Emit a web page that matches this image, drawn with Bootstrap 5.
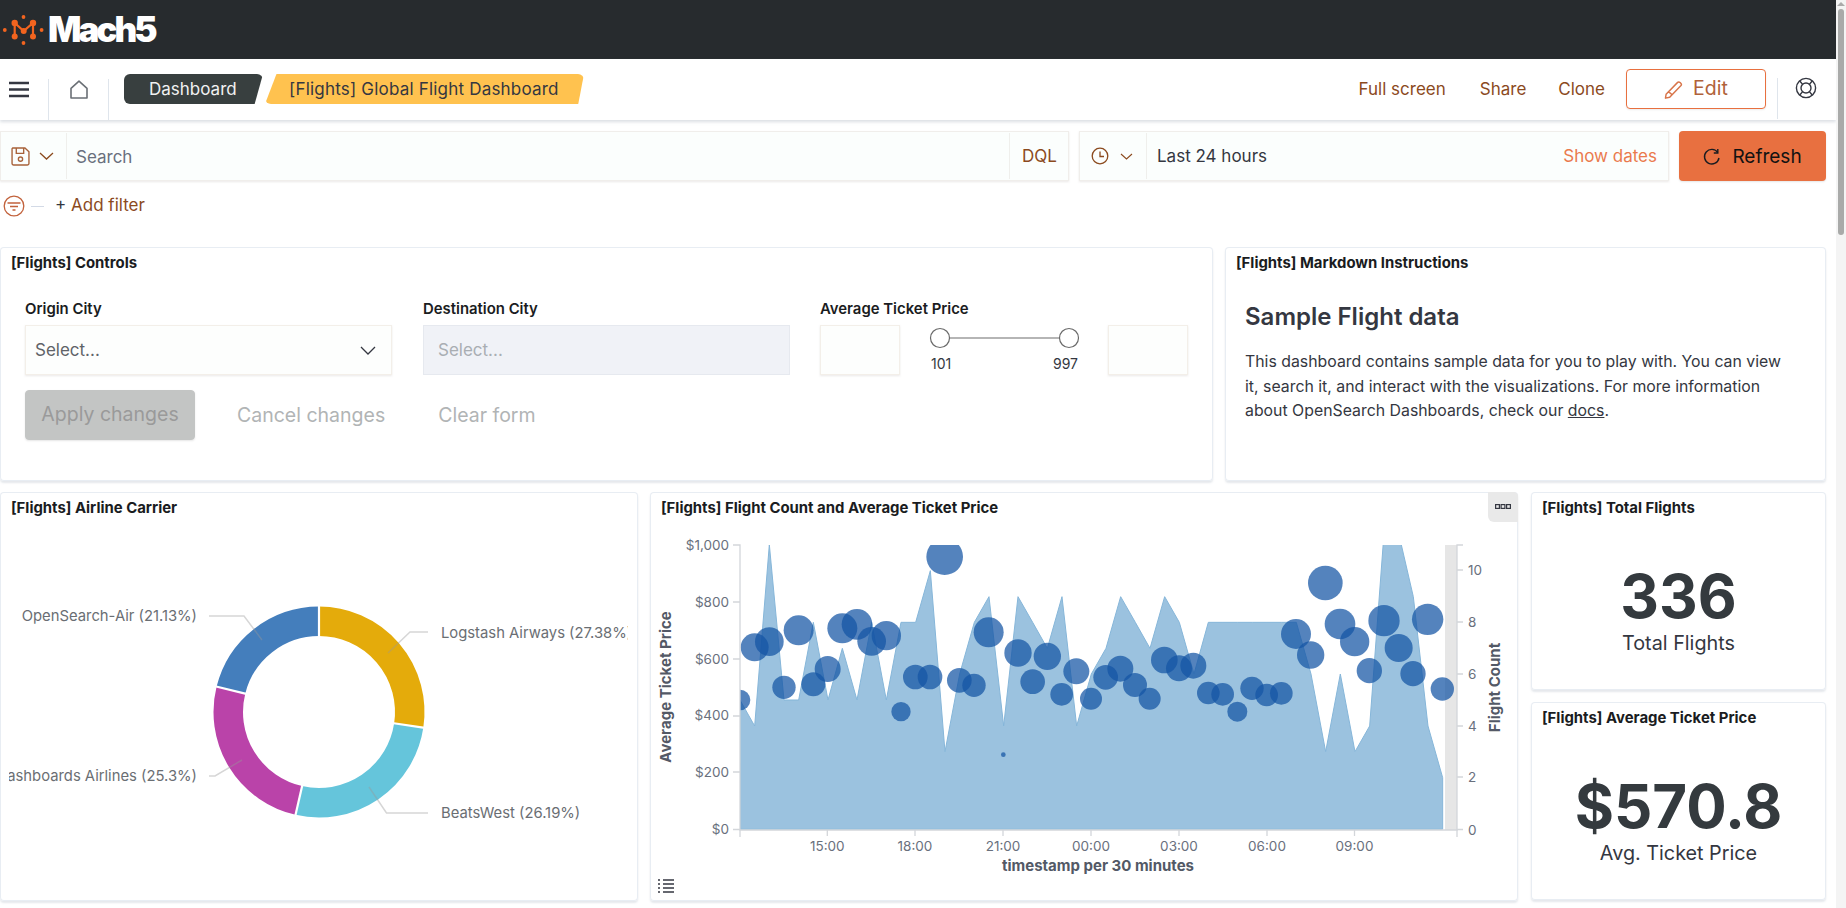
<!DOCTYPE html>
<html lang="en">
<head>
<meta charset="utf-8">
<title>[Flights] Global Flight Dashboard</title>
<link rel="stylesheet" href="https://cdn.jsdelivr.net/npm/bootstrap@5.3.0/dist/css/bootstrap.min.css">
<style>
html,body{height:908px;overflow:hidden;background:#fff;}
body{font-family:Inter,"Liberation Sans",sans-serif;font-size:17px;color:#343741;}
.shell{height:908px;}
.page-col{width:1836px;flex:none;height:908px;overflow:hidden;}
.rail{width:10px;flex:none;background:#f4f4f4;}
.rail-arrow{width:0;height:0;border-left:4px solid transparent;border-right:4px solid transparent;border-bottom:4px solid #aaa;margin:2px 0 3px 1px;}
.rail-thumb{width:6px;height:226px;background:#a9aaa9;border-radius:3px;margin-left:2px;}
.top-bar{height:59px;background:#272b2e;padding:0;flex-wrap:nowrap;justify-content:flex-start;}
.logo-mark{margin-left:2px;}
.logo-word{font-weight:900;font-size:35px;line-height:59px;letter-spacing:-3px;color:#fff;margin-left:4px;}
.sub-bar{height:61px;box-shadow:0 2px 3px rgba(152,162,179,.35);position:relative;background:#fff;}
.nav-cell{height:41px;margin-top:20px;border-right:1px solid #dfe5ec;}
.cell-a{width:49px;}.cell-b{width:60px;}
.cell-a svg{margin:2px 0 0 8px;display:block;}
.cell-b svg{margin:1px 0 0 20px;display:block;}
.crumb{height:30px;line-height:30px;margin-top:15px;font-size:17px;white-space:nowrap;}
.crumb-dark{background:#383f3f;color:#f1f1f1;width:139px;margin-left:15px;padding-left:25px;border-radius:6px;clip-path:polygon(0 0,100% 0,94% 100%,0 100%);}
.crumb-gold{background:#ffc24f;color:#343741;width:319px;margin-left:2px;padding-left:24px;border-radius:6px;letter-spacing:.2px;clip-path:polygon(3.6% 0,100% 0,98.2% 100%,0 100%);}
.nav-link-x{color:#8b4a1e;font-size:17px;line-height:20px;}
.edit-btn{width:140px;height:40px;border:1px solid #e8703f;border-radius:4px;color:#b0623a;background:#fff;font-size:19.500px;display:flex;align-items:center;justify-content:center;gap:8px;padding:0;box-shadow:0 1px 2px rgba(0,0,0,.08);}
.q-row{padding-top:11px;height:61px;gap:0;}
.q-box{height:50px;background:#fbfefd;box-shadow:inset 0 0 0 1px #f0eeeb,0 1px 2px rgba(120,110,100,.15);}
.q-search{width:1069px;}
.q-time{width:590px;margin-left:10px;}
.q-sep{width:1px;height:46px;background:#efefec;flex:none;}
.refresh-btn{width:147px;height:50px;margin-left:10px;background:#e87040;border:0;border-radius:4px;color:#121212;font-size:19px;font-weight:400;display:flex;align-items:center;justify-content:center;gap:11px;padding:2px 0 0;box-shadow:0 1px 2px rgba(0,0,0,.1);}
.brown{color:#8b4a1e;}
.muted-q{color:#69707d;}
.filter-row{height:50px;margin-bottom:16px;}
.plus-mark{color:#343741;}
.grid-zone{gap:11px;}
.panel{--bs-card-border-width:0;border-radius:4px;background:#fff;box-shadow:inset 0 0 0 1px #e8edf3,0 2px 2px rgba(152,162,179,.25);overflow:hidden;flex:none;}
.panel-head{height:36px;padding:6px 11px 0;font-size:14.900px;font-weight:700;line-height:20px;color:#1a1c21;white-space:nowrap;}
.w-ctrl{width:1213px;height:234px;}
.w-md{width:601px;height:234px;margin-left:12px;}
.w-pie{width:638px;height:409px;}
.w-chart{width:868px;height:409px;margin-left:12px;}
.w-side{width:295px;margin-left:13px;gap:12px;}
.metric-panel{height:198px;}
.ctrl-body{padding:16px 0 0 25px;}
.ctrl-col{width:367px;}
.ctrl-col+.ctrl-col{margin-left:31px;}
.ctrl-col.wide{width:368px;margin-left:30px;}
.ctrl-label{font-size:14.900px;font-weight:600;line-height:20px;color:#1a1c21;margin-bottom:6px;white-space:nowrap;}
.ctrl-input{height:50px;background:#fdfefd;box-shadow:inset 0 0 0 1px #f3efe9,0 1px 2px rgba(120,110,100,.15);padding:0 10px;color:#5f6368;line-height:50px;}
.ctrl-input.off{background:#f0f2f7;box-shadow:inset 0 0 0 1px #e6e9ef;color:#a9aeb3;padding-left:15px;}
.ctrl-input.numbox{width:80px;flex:none;}
.btn-row{margin-top:15px;}
.apply-x{--bs-btn-disabled-bg:#c3c5c4;--bs-btn-disabled-color:#9a9a9a;--bs-btn-disabled-border-color:#c3c5c4;--bs-btn-disabled-opacity:1;width:170px;height:50px;font-size:19.500px;padding:0;border-radius:4px;box-shadow:0 1px 2px rgba(0,0,0,.1);white-space:nowrap;}
.ghost-x{color:#b1b4b5;font-size:19.500px;line-height:50px;white-space:nowrap;}
.ghost-a{margin-left:42px;}.ghost-b{margin-left:53px;}
.md-body{padding:19px 20px 0;}
.md-title{font-size:24px;font-weight:600;line-height:30px;color:#343741;margin:0 0 19px;}
.md-copy{font-size:15.850px;line-height:24.700px;color:#343741;margin:-1px 0 0;white-space:nowrap;}
.md-copy a{color:#343741;}
.metric-big{font-size:60px;font-weight:700;line-height:60px;color:#343a3e;margin-top:38px;text-align:center;}
.metric-sub{font-size:19.800px;line-height:24px;color:#343741;margin-top:5px;text-align:center;}
.menu-chip{position:absolute;top:0;right:0;width:30px;height:30px;background:#e9e9e9;border-radius:0 4px 0 6px;display:flex;align-items:center;justify-content:center;}
.viz{display:block;}
.viz text{font-family:Inter,"Liberation Sans",sans-serif;}
.tick-t{font-size:13.500px;fill:#69707d;}
.axis-t{font-size:15px;font-weight:700;fill:#535966;}
.pie-t{font-size:14.800px;fill:#6a6e73;}
.ms-custom-a{margin-left:34px;}
.ms-custom-b{margin-left:32px;}
.ms-custom-c{margin-left:21px;}
.right-group{align-self:flex-start;height:59px;}
.help-cell{width:59px;margin:20px 0 0 11px;border-right:0;border-left:1px solid #dfe5ec;}
.help-cell svg{display:block;margin:-1px 0 0 17px;}
.save-zone{width:66px;padding-left:11px;flex:none;}
.chev-a{margin-left:9px;}
.search-word{padding:3px 0 0 9px;}
.dql-word{width:59px;text-align:center;padding-top:1px;}
.clock-zone{width:67px;padding-left:12px;flex:none;}
.chev-b{margin-left:11px;}
.last-word{padding:2px 0 0 10px;color:#343741;}
.dates-word{color:#ea7a4d;padding:2px 12px 0 0;}
.filter-ic{margin-left:3px;}
.dash-x{width:13px;height:1px;background:#d3dae6;margin:0 11px 0 6px;}
.sel-chev{margin-right:6px;}
</style>
</head>
<body>
<div class="shell d-flex">
<div class="page-col d-flex flex-column">

  <nav class="navbar top-bar">
    <svg class="logo-mark" width="42" height="32" viewBox="0 12 42 32" aria-hidden="true">
      <g fill="#f2641f"><circle cx="2.800" cy="28" r="1.900"/><circle cx="21.500" cy="15" r="1.900"/><circle cx="39.600" cy="28" r="1.900"/><circle cx="21.500" cy="41" r="1.900"/>
      <circle cx="12.700" cy="21" r="3.200"/><circle cx="31" cy="21" r="3.200"/><circle cx="12.700" cy="34.600" r="3"/><circle cx="31" cy="34.600" r="3"/><circle cx="21.700" cy="29" r="3"/></g>
      <path d="M12.700 34.600V21l9 8 9.300-8v13.600" fill="none" stroke="#f2641f" stroke-width="2.200"/>
    </svg>
    <span class="logo-word">Mach5</span>
  </nav>

  <div class="sub-bar d-flex">
    <div class="nav-cell cell-a"><svg width="22" height="17" viewBox="0 0 22 17" aria-hidden="true"><path d="M1 2h20M1 8.500h20M1 15h20" stroke="#343741" stroke-width="2.400" fill="none"/></svg></div>
    <div class="nav-cell cell-b"><svg width="20" height="19" viewBox="0 0 20 19" aria-hidden="true"><path d="M2 8.300 10 1.200l8 7.100V18H2z" fill="none" stroke="#6a6f75" stroke-width="1.600" stroke-linejoin="round"/></svg></div>
    <div class="crumb crumb-dark">Dashboard</div>
    <div class="crumb crumb-gold">[Flights] Global Flight Dashboard</div>
    <div class="ms-auto d-flex align-items-center right-group">
      <span class="nav-link-x">Full screen</span>
      <span class="nav-link-x ms-custom-a">Share</span>
      <span class="nav-link-x ms-custom-b">Clone</span>
      <button class="btn edit-btn ms-custom-c" type="button">
        <svg width="21" height="20" viewBox="0 0 20 19" aria-hidden="true"><path d="M2 14.500 13 3.200c1.300-1.300 4.600 1.400 3.200 3L5.400 17.300l-4 .9zM4.500 12.200l3.300 2.800" fill="none" stroke="#d8754a" stroke-width="1.400" stroke-linejoin="round"/></svg>
        Edit
      </button>
      <div class="nav-cell help-cell"><svg width="22" height="22" viewBox="0 0 22 22" aria-hidden="true"><g fill="none" stroke="#343741" stroke-width="1.400"><circle cx="11" cy="11" r="9.600"/><circle cx="11" cy="11" r="5"/><path d="M4.600 3.700 7.600 7.400M17.400 3.700l-3 3.700M4.600 18.300l3-3.700M17.400 18.300l-3-3.700"/></g></svg></div>
    </div>
  </div>

  <div class="q-row d-flex">
    <div class="q-box q-search d-flex align-items-center">
      <div class="d-flex align-items-center save-zone">
        <svg width="19" height="19" viewBox="0 0 18 18" aria-hidden="true"><path d="M1.600 1h11.600L17 4.600v11a1.400 1.400 0 0 1-1.400 1.400H2.400A1.400 1.400 0 0 1 1 15.600V1.600zM5 1v5h7V1" fill="none" stroke="#a8623a" stroke-width="1.300"/><circle cx="9" cy="11.500" r="2" fill="none" stroke="#a8623a" stroke-width="1.300"/></svg>
        <svg class="chev-a" width="15" height="8" viewBox="0 0 15 8" aria-hidden="true"><path d="m1 1 6.500 6L14 1" fill="none" stroke="#8b4a1e" stroke-width="1.300"/></svg>
      </div>
      <div class="q-sep"></div>
      <span class="muted-q flex-grow-1 search-word">Search</span>
      <div class="q-sep"></div>
      <span class="brown dql-word">DQL</span>
    </div>
    <div class="q-box q-time d-flex align-items-center">
      <div class="d-flex align-items-center clock-zone">
        <svg width="18" height="18" viewBox="0 0 18 18" aria-hidden="true"><circle cx="9" cy="9" r="7.800" fill="none" stroke="#8b4a1e" stroke-width="1.300"/><path d="M9 4.500V9.500h4" fill="none" stroke="#8b4a1e" stroke-width="1.300"/></svg>
        <svg class="chev-b" width="13" height="7" viewBox="0 0 13 7" aria-hidden="true"><path d="m1 1 5.500 5L12 1" fill="none" stroke="#8b4a1e" stroke-width="1.100"/></svg>
      </div>
      <div class="q-sep"></div>
      <span class="flex-grow-1 last-word">Last 24 hours</span>
      <span class="dates-word">Show dates</span>
    </div>
    <button class="btn refresh-btn" type="button">
      <svg width="18" height="18" viewBox="0 0 18 18" aria-hidden="true"><path d="M14.800 4.500A7.300 7.300 0 1 0 16 10" fill="none" stroke="#1a1c21" stroke-width="1.400"/><path d="M14.800 1v4h-4" fill="none" stroke="#1a1c21" stroke-width="1.400"/></svg>
      Refresh
    </button>
  </div>

  <div class="filter-row d-flex align-items-center">
    <svg class="filter-ic" width="22" height="22" viewBox="0 0 22 22" aria-hidden="true"><circle cx="11" cy="11" r="9.800" fill="none" stroke="#c2623c" stroke-width="1.300"/><path d="M4.500 8h13M7 11.500h8M9.500 15h3" stroke="#c2623c" stroke-width="1.300"/></svg>
    <span class="dash-x"></span>
    <span class="brown"><span class="plus-mark">+</span> Add filter</span>
  </div>

  <div class="grid-zone d-flex flex-column">
    <div class="d-flex">
      <section class="card panel w-ctrl">
        <div class="panel-head">[Flights] Controls</div>
        <div class="ctrl-body">
          <div class="d-flex">
            <div class="ctrl-col">
              <div class="ctrl-label">Origin City</div>
              <div class="ctrl-input d-flex align-items-center justify-content-between"><span>Select...</span>
                <svg class="sel-chev" width="16" height="9" viewBox="0 0 16 9" aria-hidden="true"><path d="m1 1 7 7 7-7" fill="none" stroke="#343741" stroke-width="1.300"/></svg></div>
            </div>
            <div class="ctrl-col">
              <div class="ctrl-label">Destination City</div>
              <div class="ctrl-input off">Select...</div>
            </div>
            <div class="ctrl-col wide">
              <div class="ctrl-label">Average Ticket Price</div>
              <div class="d-flex">
                <div class="ctrl-input numbox"></div>
                <svg class="viz flex-grow-1" width="208" height="50" viewBox="900 325 208 50">
                  <path d="M950 338h109" stroke="#b5b5b5" stroke-width="2"/>
                  <circle cx="940" cy="338" r="9.500" fill="#fff" stroke="#6a6a6a" stroke-width="1.200"/>
                  <circle cx="1069" cy="338" r="9.500" fill="#fff" stroke="#6a6a6a" stroke-width="1.200"/>
                  <text x="931" y="369" font-size="14" fill="#343741">101</text>
                  <text x="1053" y="369" font-size="14" fill="#343741">997</text>
                </svg>
                <div class="ctrl-input numbox"></div>
              </div>
            </div>
          </div>
          <div class="btn-row d-flex">
            <button class="btn apply-x" type="button" disabled>Apply changes</button>
            <span class="ghost-x ghost-a">Cancel changes</span>
            <span class="ghost-x ghost-b">Clear form</span>
          </div>
        </div>
      </section>
      <section class="card panel w-md">
        <div class="panel-head">[Flights] Markdown Instructions</div>
        <div class="md-body">
          <h3 class="md-title">Sample Flight data</h3>
          <p class="md-copy">This dashboard contains sample data for you to play with. You can view<br>it, search it, and interact with the visualizations. For more information<br>about OpenSearch Dashboards, check our <a href="#">docs</a>.</p>
        </div>
      </section>
    </div>

    <div class="d-flex">
      <section class="card panel w-pie">
        <div class="panel-head">[Flights] Airline Carrier</div>
        <svg class="viz" width="638" height="373" viewBox="0 528 638 373" role="img" aria-label="Airline carrier donut chart">
          <defs>
            <clipPath id="pieClip"><rect x="9" y="528" width="619" height="373"/></clipPath>
          </defs>
          <g fill="none" stroke-width="29.500">
            <path d="M319 621.250A90.750 90.750 0 0 1 408.730 725.520" stroke="#e4ab0b"/>
            <path d="M408.730 725.520A90.750 90.750 0 0 1 298.820 800.480" stroke="#65c5db"/>
            <path d="M298.820 800.480A90.750 90.750 0 0 1 230.920 690.160" stroke="#ba43a9"/>
            <path d="M230.920 690.160A90.750 90.750 0 0 1 319 621.250" stroke="#447ebc"/>
          </g>
          <g stroke="#fff" stroke-width="2.200">
            <path d="M319 605v33"/>
            <path d="M392.170 723.030 424.800 727.940"/>
            <path d="M302.540 784.150 295.200 816.330"/>
            <path d="M247.180 694.190 215.150 686.250"/>
          </g>
          <g fill="none" stroke="#999" stroke-opacity=".4" stroke-width="1.500">
            <path d="M209 616h35l18 24"/>
            <path d="M428 632h-18l-22 21"/>
            <path d="M209 776h6l27-16"/>
            <path d="M428 813h-41.500L369 787"/>
          </g>
          <g clip-path="url(#pieClip)">
            <text class="pie-t" x="197" y="621" text-anchor="end">OpenSearch-Air (21.13%)</text>
            <text class="pie-t" x="441" y="638">Logstash Airways (27.38%)</text>
            <text class="pie-t" x="197" y="781" text-anchor="end">OpenSearch Dashboards Airlines (25.3%)</text>
            <text class="pie-t" x="441" y="818">BeatsWest (26.19%)</text>
          </g>
        </svg>
      </section>

      <section class="card panel w-chart">
        <div class="panel-head">[Flights] Flight Count and Average Ticket Price</div>
        <div class="menu-chip"><svg width="16" height="6" viewBox="0 0 16 6" aria-hidden="true"><g fill="none" stroke="#343741" stroke-width="1.200"><rect x=".6" y=".6" width="3.800" height="3.800"/><rect x="6.100" y=".6" width="3.800" height="3.800"/><rect x="11.600" y=".6" width="3.800" height="3.800"/></g></svg></div>
        <svg class="viz" width="868" height="373" viewBox="650 528 868 373" role="img" aria-label="Flight count and average ticket price chart">
          <defs><clipPath id="plotClip"><rect x="740" y="545" width="717" height="285"/></clipPath></defs>
          <rect x="1445" y="545" width="12" height="285" fill="#e6e6e6"/>
          <g clip-path="url(#plotClip)">
            <g transform="translate(640 490) scale(.33333)">
              <polygon fill="#9bc2df" stroke="#86b6d9" stroke-width="3" points="300,1018 300,630 344,708 388,164 432,630 476,630 520,397 564,630 607,475 651,630 695,397 739,630 783,397 827,397 871,242 915,785 959,552 1003,397 1047,320 1091,708 1134,320 1178,397 1222,475 1266,320 1310,708 1354,552 1398,475 1442,320 1486,397 1530,475 1574,320 1618,397 1662,552 1705,397 1749,397 1793,397 1837,397 1881,397 1925,397 1969,397 2013,552 2057,785 2101,552 2145,785 2189,708 2232,130 2276,130 2320,320 2364,708 2408,863 2408,1018"/>
            </g>
            <g transform="translate(640 490) scale(.33333)" fill="#1455a4" fill-opacity=".73">
              <circle cx="300" cy="630" r="31"/><circle cx="344" cy="472" r="42"/><circle cx="388" cy="455" r="43"/><circle cx="432" cy="592" r="35"/><circle cx="476" cy="421" r="45"/><circle cx="520" cy="583" r="36"/><circle cx="563" cy="537" r="39"/><circle cx="607" cy="415" r="45"/><circle cx="651" cy="403" r="46"/><circle cx="695" cy="454" r="43"/><circle cx="739" cy="437" r="44"/><circle cx="783" cy="665" r="29"/><circle cx="826" cy="561" r="37"/><circle cx="870" cy="561" r="37"/><circle cx="914" cy="200" r="55"/><circle cx="958" cy="571" r="37"/><circle cx="1002" cy="586" r="35"/><circle cx="1046" cy="427" r="45"/><circle cx="1090" cy="794" r="7"/><circle cx="1134" cy="489" r="41"/><circle cx="1178" cy="575" r="37"/>
            </g>
            <g transform="translate(1040 490) scale(.33333)" fill="#1455a4" fill-opacity=".73">
              <circle cx="22" cy="499" r="41"/><circle cx="65" cy="613" r="34"/><circle cx="109" cy="544" r="39"/><circle cx="153" cy="626" r="33"/><circle cx="197" cy="562" r="37"/><circle cx="241" cy="536" r="39"/><circle cx="285" cy="585" r="36"/><circle cx="329" cy="626" r="33"/><circle cx="373" cy="510" r="40"/><circle cx="417" cy="535" r="39"/><circle cx="460" cy="527" r="39"/><circle cx="505" cy="609" r="34"/><circle cx="548" cy="613" r="34"/><circle cx="592" cy="665" r="30"/><circle cx="636" cy="595" r="35"/><circle cx="680" cy="615" r="34"/><circle cx="724" cy="610" r="34"/><circle cx="768" cy="432" r="45"/><circle cx="812" cy="495" r="41"/><circle cx="856" cy="279" r="52"/><circle cx="900" cy="402" r="46"/><circle cx="944" cy="455" r="44"/><circle cx="988" cy="542" r="38"/><circle cx="1032" cy="392" r="47"/><circle cx="1076" cy="474" r="42"/><circle cx="1119" cy="551" r="38"/><circle cx="1163" cy="388" r="47"/><circle cx="1207" cy="597" r="35"/>
            </g>
          </g>
          <g fill="none" stroke="#d3d6da" stroke-width="1.300">
            <path d="M733 545h7v285h717V545h6M733 602h7M733 659h7M733 716h7M733 772h7M733 829.500h7"/>
            <path d="M740 830v7M827.300 830v6M915 830v6M1003 830v6M1091 830v6M1179 830v6M1267 830v6M1354.500 830v6M1457 830v7"/>
            <path d="M1457 570h6M1457 622h6M1457 674h6M1457 726h6M1457 777h6M1457 829.500h6"/>
          </g>
          <g text-anchor="end">
            <text class="tick-t" x="729" y="549.500">$1,000</text>
            <text class="tick-t" x="729" y="606.500">$800</text>
            <text class="tick-t" x="729" y="663.500">$600</text>
            <text class="tick-t" x="729" y="720">$400</text>
            <text class="tick-t" x="729" y="777">$200</text>
            <text class="tick-t" x="729" y="834">$0</text>
          </g>
          <g text-anchor="middle">
            <text class="tick-t" x="827.300" y="851">15:00</text>
            <text class="tick-t" x="915" y="851">18:00</text>
            <text class="tick-t" x="1003" y="851">21:00</text>
            <text class="tick-t" x="1091" y="851">00:00</text>
            <text class="tick-t" x="1179" y="851">03:00</text>
            <text class="tick-t" x="1267" y="851">06:00</text>
            <text class="tick-t" x="1354.500" y="851">09:00</text>
          </g>
          <g>
            <text class="tick-t" x="1468" y="575">10</text>
            <text class="tick-t" x="1468" y="627">8</text>
            <text class="tick-t" x="1468" y="679">6</text>
            <text class="tick-t" x="1468" y="731">4</text>
            <text class="tick-t" x="1468" y="782">2</text>
            <text class="tick-t" x="1468" y="834.500">0</text>
          </g>
          <text class="axis-t" x="1098" y="871" text-anchor="middle">timestamp per 30 minutes</text>
          <text class="axis-t" transform="translate(671 687) rotate(-90)" text-anchor="middle">Average Ticket Price</text>
          <text class="axis-t" transform="translate(1500 687.500) rotate(-90)" text-anchor="middle">Flight Count</text>
          <g stroke="#343741" stroke-width="1.300" fill="none"><path d="M658 880h2M663 880h11M658 884h2M663 884h11M658 888h2M663 888h11M658 892h2M663 892h11"/></g>
        </svg>
      </section>

      <div class="w-side d-flex flex-column">
        <section class="card panel metric-panel">
          <div class="panel-head">[Flights] Total Flights</div>
          <div class="metric-big">336</div>
          <div class="metric-sub">Total Flights</div>
        </section>
        <section class="card panel metric-panel">
          <div class="panel-head">[Flights] Average Ticket Price</div>
          <div class="metric-big">$570.8</div>
          <div class="metric-sub">Avg. Ticket Price</div>
        </section>
      </div>
    </div>
  </div>
</div>
<div class="rail"><div class="rail-arrow"></div><div class="rail-thumb"></div></div>
</div>
</body>
</html>
